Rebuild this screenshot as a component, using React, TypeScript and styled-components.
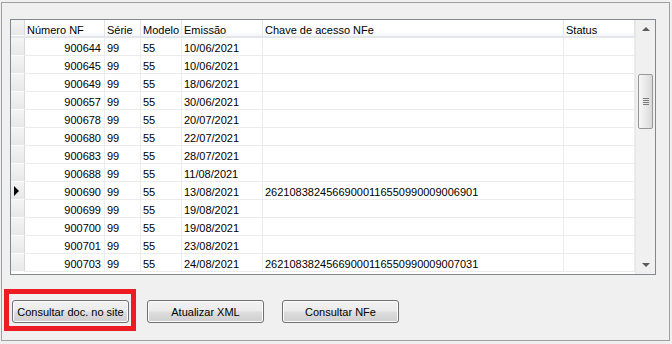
import React from 'react'
import styled, { createGlobalStyle } from 'styled-components'

const GlobalStyle = createGlobalStyle`
  html, body {
    margin: 0;
    padding: 0;
    background: #f0f0f0;
  }
  body {
    font-family: "Liberation Sans", Arial, sans-serif;
    font-size: 11px;
    color: #000;
  }
`

const Window = styled.div`
  width: 672px;
  height: 344px;
  box-sizing: border-box;
  padding: 2px 2px 3px 1px;
  background: #f0f0f0;
`

const Frame = styled.div`
  height: 100%;
  box-sizing: border-box;
  border: 1px solid #a0a0a0;
  padding: 16px 13px 0 8px;
`

const Grid = styled.div`
  display: flex;
  border: 1px solid #828790;
  background: #fff;
  height: 256px;
  box-sizing: border-box;
`

const Table = styled.div`
  flex: 1;
  display: flex;
  flex-direction: column;
  overflow: hidden;
`

const Row = styled.div`
  display: flex;
  height: 18px;
  flex-shrink: 0;
`

const HeaderRow = styled(Row)`
  background: linear-gradient(#ffffff 0%, #ffffff 70%, #f3f5f7 100%);
  border-bottom: 2px solid #e3e7ec;
  height: 16px;
`

const Cell = styled.div<{ $w: number; $right?: boolean }>`
  width: ${(p) => p.$w}px;
  flex-shrink: 0;
  box-sizing: border-box;
  border-right: 1px solid #ececec;
  border-bottom: 1px solid #ececec;
  padding: ${(p) => (p.$right ? '0 3px 0 0' : '0 0 0 2px')};
  text-align: ${(p) => (p.$right ? 'right' : 'left')};
  line-height: 20px;
  white-space: nowrap;
  overflow: hidden;
`

const HeadCell = styled.div<{ $w: number }>`
  width: ${(p) => p.$w}px;
  flex-shrink: 0;
  box-sizing: border-box;
  border-right: 1px solid #e2e4e8;
  padding-left: 2px;
  line-height: 20px;
  height: 16px;
  overflow: hidden;
  white-space: nowrap;
`

const Indicator = styled.div`
  width: 14px;
  flex-shrink: 0;
  box-sizing: border-box;
  background: linear-gradient(#f4f4f4, #e8e8e8);
  border-right: 1px solid #d8d8d8;
  border-bottom: 1px solid #fbfbfb;
  display: flex;
  align-items: center;
  padding-left: 3px;
`

const Pointer = styled.span`
  width: 0;
  height: 0;
  margin-top: 1px;
  border-top: 5px solid transparent;
  border-bottom: 5px solid transparent;
  border-left: 5px solid #000;
`

const ScrollBar = styled.div`
  width: 20px;
  flex-shrink: 0;
  background: #f0f0f0;
  border-left: 1px solid #e8e8e8;
  box-sizing: border-box;
  display: flex;
  flex-direction: column;
  align-items: center;
`

const Arrow = styled.div<{ $down?: boolean }>`
  height: 18px;
  display: flex;
  align-items: center;
  justify-content: center;
  &::after {
    content: '';
    width: 0;
    height: 0;
    border-left: 4px solid transparent;
    border-right: 4px solid transparent;
    ${(p) =>
      p.$down ? 'border-top: 4px solid #5a5a5a;' : 'border-bottom: 4px solid #5a5a5a;'}
  }
`

const Track = styled.div`
  flex: 1;
  width: 100%;
  display: flex;
  justify-content: center;
  padding-top: 36px;
  box-sizing: border-box;
`

const Thumb = styled.div`
  width: 15px;
  height: 55px;
  box-sizing: border-box;
  border: 1px solid #979797;
  border-radius: 2px;
  background: linear-gradient(90deg, #f6f6f6 0%, #e9e9e9 50%, #d9d9d9 100%);
  display: flex;
  align-items: center;
  justify-content: center;
`

const Grip = styled.div`
  width: 6px;
  height: 7px;
  background: repeating-linear-gradient(#7a7a7a 0, #7a7a7a 1px, transparent 1px, transparent 2px);
`

const ButtonRow = styled.div`
  display: flex;
  gap: 18px;
  margin: 25px 0 0 2px;
`

const ButtonSlot = styled.div`
  position: relative;
`

const Highlight = styled.div`
  position: absolute;
  left: -8px;
  top: -11px;
  width: 132px;
  height: 42px;
  box-sizing: border-box;
  border: 5px solid #ed1c24;
  pointer-events: none;
`

const Button = styled.button`
  width: 117px;
  height: 23px;
  box-sizing: border-box;
  border: 1px solid #707070;
  border-radius: 3px;
  background: linear-gradient(#f2f2f2 0%, #ebebeb 48%, #dddddd 52%, #cfcfcf 100%);
  box-shadow: inset 0 0 0 1px #fcfcfc;
  font-family: "Liberation Sans", Arial, sans-serif;
  font-size: 11px;
  white-space: nowrap;
  color: #000;
  padding: 0;
`

const columns = [
  { title: 'Número NF', w: 80 },
  { title: 'Série', w: 36 },
  { title: 'Modelo', w: 41 },
  { title: 'Emissão', w: 81 },
  { title: 'Chave de acesso NFe', w: 301 },
  { title: 'Status', w: 71 },
]

const rows = [
  ['900644', '10/06/2021', ''],
  ['900645', '10/06/2021', ''],
  ['900649', '18/06/2021', ''],
  ['900657', '30/06/2021', ''],
  ['900678', '20/07/2021', ''],
  ['900680', '22/07/2021', ''],
  ['900683', '28/07/2021', ''],
  ['900688', '11/08/2021', ''],
  ['900690', '13/08/2021', '26210838245669000116550990009006901'],
  ['900699', '19/08/2021', ''],
  ['900700', '19/08/2021', ''],
  ['900701', '23/08/2021', ''],
  ['900703', '24/08/2021', '26210838245669000116550990009007031'],
]

function App() {
  return (
    <Window>
      <GlobalStyle />
      <Frame>
        <Grid>
          <Table>
            <HeaderRow>
              <Indicator />
              {columns.map((c) => (
                <HeadCell key={c.title} $w={c.w}>
                  {c.title}
                </HeadCell>
              ))}
            </HeaderRow>
            {rows.map(([nf, date, key]) => (
              <Row key={nf}>
                <Indicator>{nf === '900690' && <Pointer />}</Indicator>
                <Cell $w={80} $right>
                  {nf}
                </Cell>
                <Cell $w={36}>99</Cell>
                <Cell $w={41}>55</Cell>
                <Cell $w={81}>{date}</Cell>
                <Cell $w={301}>{key}</Cell>
                <Cell $w={71} />
              </Row>
            ))}
          </Table>
          <ScrollBar>
            <Arrow />
            <Track>
              <Thumb>
                <Grip />
              </Thumb>
            </Track>
            <Arrow $down />
          </ScrollBar>
        </Grid>
        <ButtonRow>
          <ButtonSlot>
            <Highlight />
            <Button>Consultar doc. no site</Button>
          </ButtonSlot>
          <ButtonSlot>
            <Button>Atualizar XML</Button>
          </ButtonSlot>
          <ButtonSlot>
            <Button>Consultar NFe</Button>
          </ButtonSlot>
        </ButtonRow>
      </Frame>
    </Window>
  )
}

export default App
